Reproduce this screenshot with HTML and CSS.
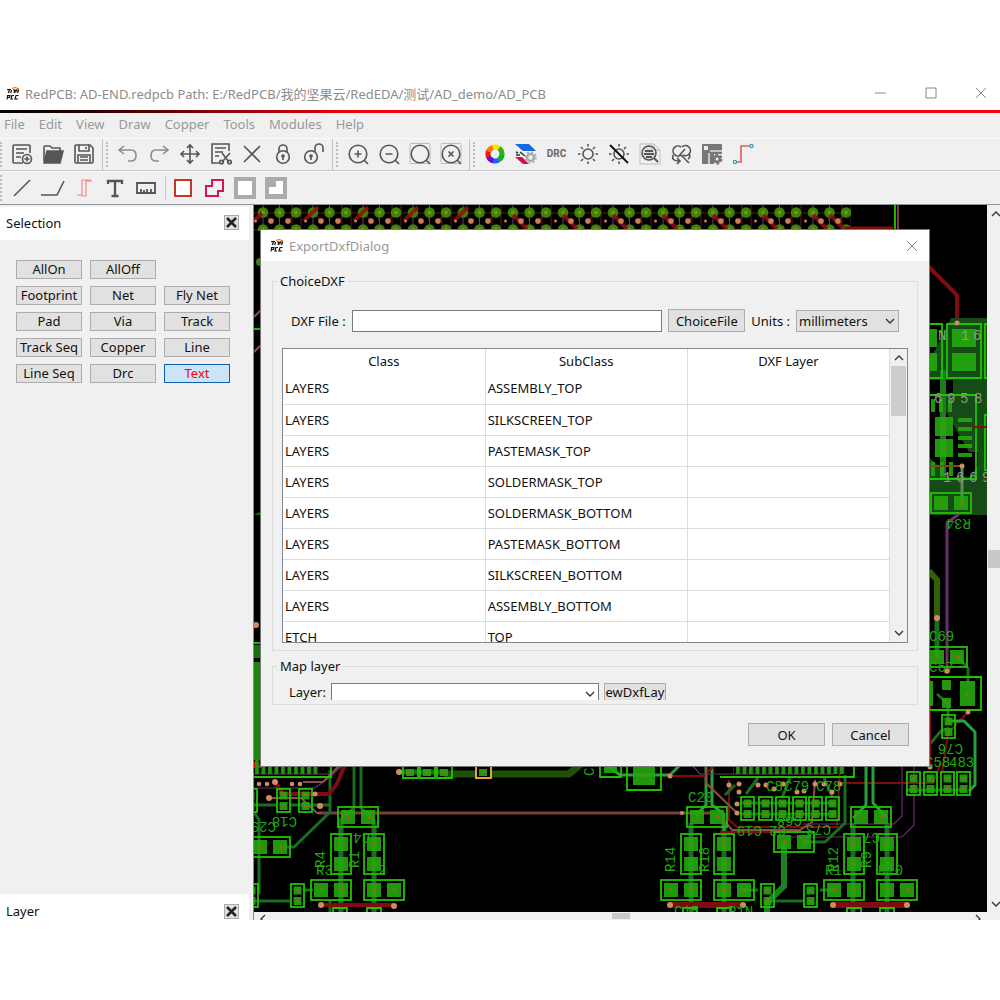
FILE: index.html
```html
<!DOCTYPE html>
<html lang="en">
<head>
  <meta charset="UTF-8">
  <title>RedPCB</title>
  <link rel="stylesheet" href="styles.css">
</head>
<body>
  <!-- shared symbols -->
  <svg class="defs" aria-hidden="true">
    <defs>
      <symbol id="logo" viewBox="0 0 14 14">
        <path d="M6 1.500l3-1 4 1.500" stroke="#f07a1e" stroke-width="1.300" fill="none"/>
        <path d="M1 2.500h4M3.500 2l-1 4M5.500 3l-.8 3M7 3h2l-1 3M9.500 5.500l1-2.500h2l-1 3M1 8.500h3l-.5 2H2M1.800 8.500L1 12.500M8 8.500H6l-1 3.500h2M12.500 8.500h-2.500l-1 3.500h3" stroke="#111" stroke-width="1.200" fill="none"/>
      </symbol>
      <symbol id="chev" viewBox="0 0 10 6"><path d="M1 1l4 4 4-4" fill="none" stroke="#333" stroke-width="1.300"/></symbol>
      <symbol id="compH" viewBox="0 0 42 22">
        <rect class="outline" x="1" y="1" width="40" height="20"/>
        <rect class="pad" x="4" y="4" width="14" height="14"/><rect class="pad" x="24" y="4" width="14" height="14"/>
        <path class="mark" d="M10 9l2 1-1 3M30 10h3l-2 3"/>
      </symbol>
      <symbol id="compV" viewBox="0 0 22 42">
        <rect class="outline" x="1" y="1" width="20" height="40"/>
        <rect class="pad" x="4" y="4" width="14" height="14"/><rect class="pad" x="4" y="24" width="14" height="14"/>
        <path class="mark" d="M9 12v-2l3 1v-2M9 31l3-1"/>
      </symbol>
      <symbol id="compS" viewBox="0 0 15 25">
        <rect class="outline" x="1" y="1" width="13" height="23"/>
        <rect class="pad" x="3.500" y="3.500" width="8" height="8"/><rect class="pad" x="3.500" y="14" width="8" height="8"/>
        <path class="mark" d="M6 7h3M6 18h3"/>
      </symbol>
      <pattern id="balls" patternUnits="userSpaceOnUse" x="254" y="204" width="50" height="17">
        <path d="M9 8.500l8.300 8.500M42 8.500l-8 8.500M25 8.500v8.500" stroke="#8b2a22" stroke-width="1"/>
        <path d="M9 0v17M25.500 0v17" stroke="#74357f" stroke-width="1"/>
        <path d="M38 0v17M47 0v17M0 9h50" stroke="#5c1a14" stroke-width="1"/>
        <g fill="#3d8206"><circle cx="9" cy="8.500" r="5.300"/><circle cx="25.500" cy="8.500" r="5.300"/><circle cx="42" cy="8.500" r="5.300"/></g>
        <g fill="#74941c"><circle cx="9" cy="8.500" r="2"/><circle cx="25.500" cy="8.500" r="2"/><circle cx="42" cy="8.500" r="2"/></g>
      </pattern>
      <pattern id="vias" patternUnits="userSpaceOnUse" x="254" y="213" width="50" height="17">
        <g fill="#cf7c59"><circle cx="17" cy="8" r="2.800"/><circle cx="34" cy="8" r="2.800"/><circle cx="1.500" cy="8" r="1.500"/></g>
      </pattern>
      <pattern id="comb" patternUnits="userSpaceOnUse" x="254" y="760" width="6.500" height="20"><rect x="1" y="0" width="4" height="14" fill="#23940f"/></pattern>
    </defs>
  </svg>

  <div class="app">
    <header class="titlebar">
      <svg class="logo"><use href="#logo"/></svg>
      <span class="title">RedPCB: AD-END.redpcb Path: E:/RedPCB/我的坚果云/RedEDA/测试/AD_demo/AD_PCB</span>
      <div class="window-controls">
        <button aria-label="Minimize"><svg viewBox="0 0 12 12"><path d="M0 6h11"/></svg></button>
        <button aria-label="Maximize"><svg viewBox="0 0 12 12"><path d="M1 1h10v10H1z"/></svg></button>
        <button aria-label="Close"><svg viewBox="0 0 12 12"><path d="M1 1l10 10M11 1L1 11"/></svg></button>
      </div>
    </header>

    <nav class="menubar">
      <a href="#">File</a><a href="#">Edit</a><a href="#">View</a><a href="#">Draw</a><a href="#">Copper</a><a href="#">Tools</a><a href="#">Modules</a><a href="#">Help</a>
    </nav>

    <div class="toolbar">
      <div class="tools first">
        <button aria-label="New"><svg viewBox="0 0 24 24"><path d="M20 11V4q0-1-1-1H4Q3 3 3 4v16q0 1 1 1h9M6 7h11M6 11h8M6 15h5"/><circle cx="17" cy="17" r="4.500"/><path d="M17 14.500v5M14.500 17h5"/></svg></button>
        <button aria-label="Open"><svg viewBox="0 0 24 24"><path class="fill" d="M6 9h16l-3 12H3z"/><path d="M3 19V5q0-1 1-1h5l2 2h8v3"/></svg></button>
        <button aria-label="Save"><svg viewBox="0 0 24 24"><path d="M3 4q0-1 1-1h14l3 3v14q0 1-1 1H4q-1 0-1-1zM7 3v6h10V3M14 5v2M6 21v-8h12v8M8 15h8M8 18h8"/></svg></button>
      </div>
      <div class="tools">
        <button aria-label="Undo"><svg class="light" viewBox="0 0 24 24"><path d="M8 4L3 8l5 4M4 8h11q5 0 5 5.500T15 19h-3"/></svg></button>
        <button aria-label="Redo"><svg class="light" viewBox="0 0 24 24"><path d="M16 4l5 4-5 4M20 8H9q-5 0-5 5.500T9 19h3"/></svg></button>
        <button aria-label="Move"><svg viewBox="0 0 24 24"><path d="M12 3v18M3 12h18M9 6l3-3 3 3M9 18l3 3 3-3M6 9l-3 3 3 3M18 9l3 3-3 3"/></svg></button>
        <button aria-label="Cut"><svg viewBox="0 0 24 24"><path d="M20 9V2H3v19h7M6 6h11M6 10h8M6 14h4M13 11l7 9M21 11l-8 9"/><circle cx="12.500" cy="20" r="1.800"/><circle cx="20.500" cy="20" r="1.800"/></svg></button>
        <button aria-label="Delete"><svg viewBox="0 0 24 24"><path d="M4 4l16 16M20 4L4 20"/></svg></button>
        <button aria-label="Lock"><svg viewBox="0 0 24 24"><circle cx="12" cy="15" r="6.300"/><path d="M8 10V7a4 4 0 0 1 8 0v3M12 14v4"/><circle class="fill" cx="12" cy="14" r="1"/></svg></button>
        <button aria-label="Unlock"><svg viewBox="0 0 24 24"><circle cx="9" cy="15" r="6.300"/><path d="M13 10V6a4 4 0 0 1 8 0v4M9 14v4"/><circle class="fill" cx="9" cy="14" r="1"/></svg></button>
      </div>
      <div class="tools">
        <button aria-label="Zoom in"><svg viewBox="0 0 24 24"><circle cx="12" cy="12" r="8.800"/><path d="M18 18l4 4M8.500 12h7M12 8.500v7"/></svg></button>
        <button aria-label="Zoom out"><svg viewBox="0 0 24 24"><circle cx="12" cy="12" r="8.800"/><path d="M18 18l4 4M8.500 12h7"/></svg></button>
        <button aria-label="Zoom fit"><svg viewBox="0 0 24 24"><rect class="frame" x="2" y="1.500" width="20" height="20" rx="1"/><circle cx="12" cy="12" r="8.800"/><path d="M18 18l4 4"/></svg></button>
        <button aria-label="Zoom selected"><svg viewBox="0 0 24 24"><rect class="frame" x="2" y="1.500" width="20" height="20" rx="1"/><circle cx="12" cy="12" r="8.800"/><path d="M18 18l4 4M9.500 9.500l5 5M14.500 9.500l-5 5"/></svg></button>
      </div>
      <div class="tools last">
        <button aria-label="Colors"><svg class="wheel" viewBox="0 0 24 24"><g stroke-width="5" stroke-dasharray="7.330 36.650"><circle cx="12" cy="12" r="7" stroke="#0bb02a"/><circle cx="12" cy="12" r="7" stroke="#1266f1" transform="rotate(60 12 12)"/><circle cx="12" cy="12" r="7" stroke="#6a10c8" transform="rotate(105 12 12)"/><circle cx="12" cy="12" r="7" stroke="#f01414" transform="rotate(155 12 12)"/><circle cx="12" cy="12" r="7" stroke="#ff7a00" transform="rotate(200 12 12)"/><circle cx="12" cy="12" r="7" stroke="#ffe100" transform="rotate(250 12 12)"/><circle cx="12" cy="12" r="7" stroke="#35ad12" transform="rotate(305 12 12)"/></g></svg></button>
        <button aria-label="Layers"><svg viewBox="0 0 24 24"><path d="M1 2h14l7 7H9z" fill="#1769e0" stroke="none"/><path d="M2 10l2 1M6 10l5 4M2 13h4" stroke="#333"/><path d="M1 15h7l7 7H9z" fill="#d4104c" stroke="none"/><circle cx="16.500" cy="15.500" r="3.500" stroke="#aaa" stroke-width="2.500"/><circle cx="16.500" cy="15.500" r="5.500" stroke="#aaa" stroke-width="1.500" stroke-dasharray="2 2.320"/></svg></button>
        <button aria-label="Design rule check"><span class="drc">DRC</span></button>
        <button aria-label="Highlight"><svg viewBox="0 0 24 24"><circle cx="12" cy="12" r="5"/><path d="M12 2v2.500M12 19.500V22M2 12h2.500M19.500 12H22M5 5l2 2M17 17l2 2M19 5l-2 2M7 17l-2 2"/></svg></button>
        <button aria-label="Highlight off"><svg viewBox="0 0 24 24"><circle cx="12" cy="12" r="5"/><path d="M12 2v2.500M12 19.500V22M2 12h2.500M19.500 12H22M5 19l2-2M19 5l-2 2"/><path d="M3 3l18 18" stroke="#111" stroke-width="2"/></svg></button>
        <button aria-label="Find"><svg viewBox="0 0 24 24"><path class="frame" d="M2 2h14l6 6v14H2zM16 2v6h6"/><circle cx="11" cy="11" r="7" fill="#ddd"/><path d="M7 9h8M6 12h10M8 15h6M16 16l4 4" stroke-width="2"/></svg></button>
        <button aria-label="Replace"><svg viewBox="0 0 24 24" stroke-width="1.300"><path d="M12 5a5 5 0 1 0 0 8M13 5a5 5 0 1 1 1 8M4 13q-2 6 6 6M8 16l3 3-3 3M12 13l8 8M9 15l7-8M20 12q2 3-1 5"/></svg></button>
        <button aria-label="Module settings"><svg viewBox="0 0 24 24"><path d="M3 2h18q1 0 1 1v9h-8v10H3q-1 0-1-1V3q0-1 1-1z" fill="#777" stroke="none"/><path d="M4 4h4v4H4z" fill="#eee" stroke="none"/><path d="M10 9h12M9 11v11" stroke="#ddd"/><circle cx="17" cy="17" r="4" fill="#777" stroke="#777" stroke-width="3" stroke-dasharray="2.500 1.700"/><circle cx="17" cy="17" r="1.500" fill="#eee" stroke="none"/></svg></button>
        <button aria-label="Route"><svg viewBox="0 0 24 24"><path d="M5 20h5V4h9" stroke="#e0604f"/><circle cx="4" cy="20" r="1.600" stroke="#4592bd" stroke-width="1.200"/><circle cx="20.500" cy="4" r="1.600" stroke="#4592bd" stroke-width="1.200"/></svg></button>
      </div>
    </div>

    <div class="toolbar second">
      <div class="tools first last">
        <button aria-label="Line"><svg viewBox="0 0 24 24"><path d="M4 20L20 4"/></svg></button>
        <button aria-label="Polyline"><svg viewBox="0 0 24 24"><path d="M0 19h16l7-14"/></svg></button>
        <button aria-label="Differential pair"><svg viewBox="0 0 24 24"><path d="M5 19h5V4h9M9 20h5V5h6" stroke="#f28b88" stroke-width="1.200"/></svg></button>
        <button aria-label="Text"><svg viewBox="0 0 24 24"><path d="M5 8V5h14v3M12 5v15M8.500 20h7" stroke-width="2.300"/></svg></button>
        <button aria-label="Measure"><svg viewBox="0 0 24 24"><path d="M3 7h18v10H3zM7 17v-4M10 17v-3M13 17v-4M17 17v-4" stroke-width="1.800"/></svg></button>
        <span class="divider"></span>
        <button aria-label="Rectangle"><svg viewBox="0 0 24 24"><path d="M4 4h16v16H4z" fill="#fff" stroke="#c8362b" stroke-width="2"/></svg></button>
        <button aria-label="Polygon"><svg viewBox="0 0 24 24"><path d="M10 4h11v11h-5v5H4V10h6z" stroke="#d3155a" stroke-width="2"/></svg></button>
        <button aria-label="Copper fill"><svg viewBox="0 0 24 24"><path d="M3 3h18v18H3z" fill="#fff" stroke="#ababab" stroke-width="4"/></svg></button>
        <button aria-label="Copper cutout"><svg viewBox="0 0 24 24"><path d="M1 1h22v22H1z" fill="#ababab" stroke="none"/><path d="M12 5h7v13H5v-7h7z" fill="#fff" stroke="none"/></svg></button>
      </div>
    </div>

    <main class="workspace">
      <aside class="dock">
        <div class="dock-title"><span>Selection</span><button aria-label="Close selection"><svg viewBox="0 0 13 13"><path d="M2 2l9 9M11 2l-9 9"/></svg></button></div>
        <div class="filters">
          <button>AllOn</button><button>AllOff</button><i></i>
          <button>Footprint</button><button>Net</button><button>Fly Net</button>
          <button>Pad</button><button>Via</button><button>Track</button>
          <button>Track Seq</button><button>Copper</button><button>Line</button>
          <button>Line Seq</button><button>Drc</button><button class="active">Text</button>
        </div>
        <div class="dock-title bottom"><span>Layer</span><button aria-label="Close layer"><svg viewBox="0 0 13 13"><path d="M2 2l9 9M11 2l-9 9"/></svg></button></div>
      </aside>

      <div class="view">
        <svg class="board" viewBox="254 205 733 707" preserveAspectRatio="xMinYMin slice">
          <!-- ball grid along the top -->
          <rect x="254" y="205" width="597" height="26" fill="url(#balls)"/>
          <g stroke="#8a1010" stroke-width="4" stroke-opacity=".85">
            <path d="M254 221l8-8M304 221l14-14M354 221l14-14M404 221l14-14M454 221l14-14M513 215l14 14M563 215l14 14M613 215l14 14M663 215l14 14M713 215l14 14M763 215l14 14M813 215l14 14M830 215l14 14"/>
          </g>
          <rect x="254" y="213" width="590" height="17" fill="url(#vias)"/>
          <path d="M845 228h48" stroke="#7d0d0d" stroke-width="3"/>
          <path d="M895 205v26" stroke="#1cb500" stroke-width="2"/><path d="M898 205v26" stroke="#744037" stroke-width="2"/>

          <!-- left edge -->
          <path d="M254 317l8-8M254 352l8-8" class="brown"/>
          <path d="M254 329h8M254 643h8" stroke="#1cb500" stroke-width="2"/>
          <circle cx="256" cy="625" r="3" class="via"/><circle cx="260" cy="262" r="4" fill="#3d8206"/>
          <path d="M254 515h8v-4M254 645h8v13h-8z" fill="#157208"/>
          <path d="M254 662h8v98h-8z" fill="#1c880a"/>
          <path d="M254 762h4l3 6h-7z" fill="#d01010"/>

          <!-- right side -->
          <path d="M929 267l28 28v28" class="red"/>
          <path d="M951 318h36v197h-58v-63h40l-40-70v-20z" fill="#164a16"/>
          <path d="M929 380h24v14h-24zM940 452h38v13l-8 12h-20l-21-20v-40z" fill="#000"/>
          <path d="M943 370v110" stroke="#1f7a1f" stroke-width="6"/>
          <path class="outline" d="M929 324h13v54h-13M947 324h34v54h-34zM990 324h-5v54h5M929 395h47v84h-47M990 415h-5v55h5"/>
          <path class="pad" d="M929 329h8v18h-8zM929 353h8v18h-8zM952 329h24v18h-24zM952 353h24v18h-24zM935 417h18v19h-18zM935 439h18v18h-18zM931 399h4v13h-4zM939 399h4v13h-4zM948 399h4v13h-4zM931 462h4v14h-4zM940 462h4v14h-4zM949 462h4v14h-4zM958 418h14v4h-14zM958 427h14v4h-14zM958 436h14v4h-14zM958 444h14v4h-14zM958 453h14v4h-14z"/>
          <path class="mark" d="M963 338h3M963 364h3M942 426h4M942 448h4M963 420h3M963 429h3"/>
          <path d="M972 427h15" class="red thin"/>
          <path d="M929 466h33" stroke="#7a4a22" stroke-width="2"/><path d="M962 466v40" stroke="#5f8a5f" stroke-width="3"/>
          <path d="M959 514l-12 9v145" fill="none" stroke="#6b2f6e" stroke-width="3"/>
          <g class="net"><text x="938" y="340">N</text><text x="973" y="340">6</text><text x="961" y="340">1</text><text x="934" y="403">6</text><text x="947" y="403">9</text><text x="960" y="403">5</text><text x="974" y="403">8</text><text x="943" y="482">1</text><text x="956" y="482">6</text><text x="969" y="482">6</text><text x="982" y="482">9</text></g>
          <use href="#compH" x="930" y="492" width="42" height="22"/>
          <path d="M929 571l8 9v38" fill="none" stroke="#2f6206" stroke-width="6"/>
          <path d="M937 618v38" class="track wide"/>
          <path d="M957 656l11 12v16M937 694l11 10v20M929 745l12-14 8-3" class="track"/>
          <path d="M968 712l-20 21-6 40M930 680v86" class="red thin"/>
          <path d="M948 721h16l11 11v53l-6 6" class="bright"/>
          <use href="#compH" x="926" y="646" width="42" height="22"/>
          <path class="outline" d="M921 677h60v33h-60z"/>
          <path class="pad" d="M960 681h15v25h-15zM942 680h9v10h-9zM942 698h9v10h-9zM925 681h8v25h-8z"/>
          <path class="mark" d="M967 692v4M945 685h3M945 703h3"/>
          <use href="#compS" x="941" y="714" width="15" height="25"/>
          <g class="via"><circle cx="957" cy="323" r="2.500"/><circle cx="962" cy="466" r="2.500"/><circle cx="937" cy="618" r="3"/><circle cx="947" cy="671" r="2.800"/><circle cx="968" cy="712" r="2.500"/><circle cx="930" cy="767" r="2.500"/></g>

          <!-- tracks under the dialog -->
          <path d="M318 813h392" class="brown wide"/>
          <path d="M254 805h22M290 805h40M254 812l5 8v74M254 901h36M303 890h10M330 770v42l-36 35h-10M354 760v48l-14 12v92M361 760v48l13 12v92M330 900v12" class="track"/>
          <path d="M341 823v89M374 823v89M691 823v89M724 823v89M853 823v89M887 823v89" class="track wide"/>
          <path d="M254 774h75M254 788h60q12-6 34-28" class="purple"/>
          <path d="M275 782l8 12h46l8-10 8-20" class="red"/>
          <path d="M268 798h33l16 15h4M303 782h20l26-26" class="brown"/>
          <path d="M321 905h73" class="red"/><path d="M670 905h70M833 905h74" class="red big"/>
          <path d="M399 772h45" class="track wide"/><path d="M444 774h32M491 774h78l12-10" fill="none" stroke="#204f06" stroke-width="7"/>
          <path d="M608 766l12 9h50l12-12M712 765v40l12 9v20M706 765v40l-10 10" class="bright"/>
          <path d="M672 776h32l10-10M729 780v40l8 7h100l3-62M720 832h85" class="red thin"/>
          <path d="M706 765v18l32 31M722 818l10 12h68l12-8 3-42" class="brown"/>
          <path d="M690 763l10 11h50M734 774h100M802 824h92l8-8v-60M790 837h112l12-12v-60" class="purple"/>
          <path d="M840 783h93l8-20" class="red thin"/>
          <path d="M866 760v45l-13 13M873 760v43l14 15" class="bright"/>
          <path d="M845 775v48l-20 19h-18M906 790h60M758 890h-20M820 890h13M770 901h35M740 803h95M740 814h95" class="track"/>
          <path d="M784 842v44l-17 17v12" fill="none" stroke="#1d8023" stroke-width="6"/>
          <path d="M735 785l-10 10M758 778l-12 16M790 778l-8 20M824 778l8 18" class="track"/>

          <!-- connectors -->
          <path class="outline" d="M254 777h77v-17M720 777h134v-17"/>
          <rect x="254" y="760" width="66" height="17" fill="url(#comb)"/><rect x="733" y="760" width="112" height="17" fill="url(#comb)"/>
          <path class="outline" d="M403 760h15v18h-15zM420 760h15v18h-15zM437 760h15v18h-15zM600 760h21v17h-21zM627 760h34v30h-34z"/>
          <path d="M476 760h15v18h-15z" fill="none" stroke="#e3a33a" stroke-width="2"/>
          <path class="pad" d="M406 769h8v7h-8zM423 769h8v7h-8zM440 769h8v7h-8zM479 769h8v7h-8zM604 760h13v13h-13zM633 760h22v25h-22z"/>
          <path class="mark" d="M408 772h4M425 772h4M442 772h4M481 772h4M642 776h4"/>

          <!-- two pad parts -->
          <use href="#compH" x="337" y="806" width="42" height="22"/>
          <use href="#compH" x="310" y="879" width="42" height="22"/>
          <use href="#compH" x="363" y="879" width="42" height="22"/>
          <use href="#compH" x="249" y="836" width="42" height="22"/>
          <use href="#compH" x="686" y="806" width="42" height="22"/>
          <use href="#compH" x="660" y="879" width="42" height="22"/>
          <use href="#compH" x="713" y="879" width="42" height="22"/>
          <use href="#compH" x="850" y="806" width="42" height="22"/>
          <use href="#compH" x="773" y="831" width="42" height="22"/>
          <use href="#compH" x="823" y="879" width="42" height="22"/>
          <use href="#compH" x="876" y="879" width="42" height="22"/>
          <use href="#compV" x="330" y="833" width="22" height="42"/>
          <use href="#compV" x="363" y="833" width="22" height="42"/>
          <use href="#compV" x="680" y="833" width="22" height="42"/>
          <use href="#compV" x="713" y="833" width="22" height="42"/>
          <use href="#compV" x="843" y="833" width="22" height="42"/>
          <use href="#compV" x="876" y="833" width="22" height="42"/>
          <use href="#compS" x="276" y="788" width="15" height="25"/>
          <use href="#compS" x="298" y="788" width="15" height="25"/>
          <use href="#compS" x="243" y="788" width="15" height="25"/>
          <use href="#compS" x="290" y="883" width="15" height="25"/>
          <use href="#compS" x="244" y="883" width="15" height="25"/>
          <use href="#compS" x="740" y="796" width="15" height="25"/>
          <use href="#compS" x="758" y="796" width="15" height="25"/>
          <use href="#compS" x="775" y="796" width="15" height="25"/>
          <use href="#compS" x="792" y="796" width="15" height="25"/>
          <use href="#compS" x="808" y="796" width="15" height="25"/>
          <use href="#compS" x="825" y="796" width="15" height="25"/>
          <use href="#compS" x="760" y="883" width="15" height="25"/>
          <use href="#compS" x="803" y="883" width="15" height="25"/>
          <use href="#compS" x="906" y="771" width="15" height="25"/>
          <use href="#compS" x="923" y="771" width="15" height="25"/>
          <use href="#compS" x="940" y="771" width="15" height="25"/>
          <use href="#compS" x="956" y="771" width="15" height="25"/>
          <path class="outline" d="M333 914v-6h14v6M367 914v-6h14v6M683 914v-6h14v6M717 914v-6h14v6M847 914v-6h14v6M880 914v-6h14v6"/>

          <g class="via">
            <circle cx="399" cy="772" r="3"/><circle cx="269" cy="798" r="3"/><circle cx="275" cy="782" r="3"/><circle cx="259" cy="784" r="2.300"/><circle cx="267" cy="784" r="2.300"/><circle cx="292" cy="784" r="2.300"/><circle cx="300" cy="784" r="2.300"/><circle cx="320" cy="806" r="3"/><circle cx="315" cy="794" r="2.500"/>
            <circle cx="321" cy="905" r="3"/><circle cx="394" cy="906" r="3"/><circle cx="670" cy="905" r="3"/><circle cx="743" cy="905" r="3"/><circle cx="833" cy="905" r="3"/><circle cx="907" cy="905" r="3"/>
            <circle cx="670" cy="776" r="2.500"/><circle cx="682" cy="813" r="2"/><circle cx="729" cy="785" r="2.500"/><circle cx="739" cy="784" r="2.500"/><circle cx="739" cy="792" r="2.500"/><circle cx="737" cy="804" r="2.500"/><circle cx="737" cy="813" r="2.500"/><circle cx="758" cy="785" r="2.500"/><circle cx="766" cy="785" r="2.500"/><circle cx="774" cy="789" r="2.500"/><circle cx="783" cy="784" r="2.500"/><circle cx="797" cy="792" r="2.500"/><circle cx="804" cy="791" r="2.500"/><circle cx="815" cy="784" r="2.500"/><circle cx="824" cy="784" r="2.500"/><circle cx="832" cy="792" r="2.500"/><circle cx="840" cy="784" r="2.500"/>
          </g>

          <g class="ref">
            <text x="929" y="641">C69</text><text x="929" y="672">C67</text>
            <text transform="translate(971 519) rotate(180)">R34</text>
            <text transform="translate(963 744) rotate(180)">C76</text>
            <text x="925" y="767">C58</text><text x="949" y="767">483</text>
            <text transform="translate(297 817) rotate(180)">C18</text><text transform="translate(276 822) rotate(180)">C29</text>
            <text transform="translate(370 833) rotate(180)">C4</text>
            <text transform="translate(325 868) rotate(-90)">R4</text><text transform="translate(359 868) rotate(-90)">R1</text>
            <text x="316" y="875">R3</text><text x="378" y="875">2</text>
            <text transform="translate(594 776) rotate(-90)">C</text><text x="688" y="802">C20</text>
            <text transform="translate(675 872) rotate(-90)">R14</text><text transform="translate(709 872) rotate(-90)">R18</text>
            <text x="674" y="916">C15</text><text x="728" y="916">R1N</text>
            <text x="766" y="791">C8</text><text x="784" y="791">C79</text><text x="816" y="791">C78</text>
            <text transform="translate(762 826) rotate(180)">C19</text><text transform="translate(786 826) rotate(180)">C2</text><text transform="translate(802 816) rotate(180)">C68</text><text transform="translate(831 825) rotate(180)">C73</text>
            <text transform="translate(838 872) rotate(-90)">R12</text><text transform="translate(871 868) rotate(-90)">R9</text>
            <text x="825" y="875">R1</text><text x="878" y="875">R10</text><text transform="translate(880 833) rotate(180)">C7</text>
          </g>
        </svg>
        <div class="vbar"><svg class="up"><use href="#chev"/></svg><i></i><svg><use href="#chev"/></svg></div>
        <div class="hbar"><svg class="prev"><use href="#chev"/></svg><i></i><svg class="next"><use href="#chev"/></svg></div>
      </div>

      <section class="dialog" role="dialog" aria-label="ExportDxfDialog">
        <header class="dialog-title">
          <svg class="logo"><use href="#logo"/></svg>
          <span>ExportDxfDialog</span>
          <button aria-label="Close dialog"><svg viewBox="0 0 12 12"><path d="M1 1l10 10M11 1L1 11"/></svg></button>
        </header>
        <fieldset>
          <legend>ChoiceDXF</legend>
          <div class="file-row">
            <label for="dxfFile">DXF File :</label>
            <input type="text" id="dxfFile">
            <button class="btn">ChoiceFile</button>
            <label for="units">Units :</label>
            <div class="combo units"><select id="units"><option>millimeters</option></select><svg><use href="#chev"/></svg></div>
          </div>
          <div class="grid">
            <table>
              <thead><tr><th>Class</th><th>SubClass</th><th>DXF Layer</th></tr></thead>
              <tbody>
                <tr><td>LAYERS</td><td>ASSEMBLY_TOP</td><td></td></tr>
                <tr><td>LAYERS</td><td>SILKSCREEN_TOP</td><td></td></tr>
                <tr><td>LAYERS</td><td>PASTEMASK_TOP</td><td></td></tr>
                <tr><td>LAYERS</td><td>SOLDERMASK_TOP</td><td></td></tr>
                <tr><td>LAYERS</td><td>SOLDERMASK_BOTTOM</td><td></td></tr>
                <tr><td>LAYERS</td><td>PASTEMASK_BOTTOM</td><td></td></tr>
                <tr><td>LAYERS</td><td>SILKSCREEN_BOTTOM</td><td></td></tr>
                <tr><td>LAYERS</td><td>ASSEMBLY_BOTTOM</td><td></td></tr>
                <tr><td>ETCH</td><td>TOP</td><td></td></tr>
              </tbody>
            </table>
            <div class="grid-bar"><svg class="up"><use href="#chev"/></svg><i></i><svg><use href="#chev"/></svg></div>
          </div>
        </fieldset>
        <fieldset class="map">
          <legend>Map layer</legend>
          <div class="map-row">
            <label for="layer">Layer:</label>
            <div class="combo layer"><select id="layer"></select><svg><use href="#chev"/></svg></div>
            <button class="btn clipped">ewDxfLay</button>
          </div>
        </fieldset>
        <div class="actions"><button class="btn">OK</button><button class="btn">Cancel</button></div>
      </section>
    </main>
  </div>
</body>
</html>
```
FILE: styles.css
```css
* {
  box-sizing: border-box;
}
body {
  margin: 0;
  padding: 80px 0;
  height: 100vh;
  background: #fff;
  color: #111;
  font: 13px/18px "Noto Sans", "Noto Sans CJK SC", sans-serif;
}
button, input, select {
  font: inherit;
  color: inherit;
}
button {
  padding: 0;
  border: none;
  background: none;
}
.defs {
  position: absolute;
  width: 0;
  height: 0;
}
.app {
  display: flex;
  flex-direction: column;
  height: 100%;
  overflow: hidden;
  background: #f0f0f0;
}

/* title and menu */
.titlebar {
  display: flex;
  align-items: center;
  height: 33px;
  padding: 0 0 2px 6px;
  background: #fff;
  border-bottom: 3px solid;
  border-image: linear-gradient(90deg, #000 0, #200 80px, #f00010 360px) 1;
  color: #8c8c8c;
}
.logo {
  width: 14px;
  height: 14px;
  margin-right: 5px;
}
.window-controls {
  display: flex;
  margin: 0 -6px 0 auto;
}
.window-controls button {
  width: 50px;
  height: 28px;
}
.window-controls svg, .dialog-title button svg {
  width: 12px;
  height: 12px;
  fill: none;
  stroke: #888;
}
.menubar {
  display: flex;
  gap: 14px;
  height: 25px;
  padding: 2px 4px;
}
.menubar a {
  color: #999;
  text-decoration: none;
}

/* toolbars */
.toolbar {
  display: flex;
  height: 33px;
  border-top: 1px solid #fafafa;
  border-bottom: 1px solid #c9c9c9;
}
.second {
  height: 34px;
  border-bottom-color: #8f9399;
}
.tools {
  position: relative;
  display: flex;
  align-items: center;
  padding: 0 3px 1px 9px;
  border-right: 1px solid #c4c4c4;
}
.tools::before {
  content: "";
  position: absolute;
  left: 3px;
  top: 3px;
  bottom: 3px;
  border-left: 2px dotted #bbb;
}
.tools.first {
  margin-left: -3px;
}
.tools.last {
  border-right: none;
}
.tools button {
  display: flex;
  align-items: center;
  justify-content: center;
  width: 31px;
  height: 30px;
}
.tools svg {
  width: 24px;
  height: 24px;
  fill: none;
  stroke: #555;
  stroke-width: 1.6;
}
.tools svg.light {
  stroke: #8d8d8d;
}
.tools .fill {
  fill: #555;
}
.tools .frame {
  stroke: #bdbdbd;
  stroke-width: 1;
}
.drc {
  color: #666;
  font: bold 10px/12px Roboto, sans-serif;
}
.divider {
  width: 1px;
  height: 24px;
  margin: 0 1px 0 4px;
  background: #c8c8c8;
}

/* docked panels */
.workspace {
  position: relative;
  display: flex;
  flex: 1;
  min-height: 0;
}
.dock {
  display: flex;
  flex-direction: column;
  width: 253px;
  padding-top: 2px;
}
.dock-title {
  display: flex;
  align-items: center;
  justify-content: space-between;
  height: 33px;
  margin-right: 4px;
  padding: 0 10px 2px 6px;
  background: #fff;
}
.dock-title.bottom {
  height: 26px;
  margin-top: auto;
  padding-top: 10px;
}
.dock-title svg {
  display: block;
  width: 15px;
  height: 15px;
  background: #e0e0e0;
  border: 1px solid #aaa;
  stroke: #222;
  stroke-width: 2.5;
}
.filters {
  display: grid;
  grid-template-columns: repeat(3, 66px);
  gap: 7px 8px;
  padding: 20px 16px;
}
.filters button, .btn {
  background: #e1e1e1;
  border: 1px solid #adadad;
}
.filters button {
  height: 19px;
  line-height: 17px;
  overflow: hidden;
  white-space: nowrap;
}
.filters .active {
  background: #cce4f7;
  border-color: #0f60a8;
  color: #f00;
}

/* board canvas */
.view {
  display: grid;
  grid-template: minmax(0, 1fr) 8px / minmax(0, 1fr) 13px;
  flex: 1;
  min-width: 0;
  border-left: 1px solid #888;
}
.board {
  width: 100%;
  height: 100%;
  background: #000;
}
.outline {
  fill: none;
  stroke: #1ec400;
  stroke-width: 1.8;
}
.pad {
  fill: #23a80d;
  fill-opacity: .9;
}
.mark {
  fill: none;
  stroke: #d2501c;
}
.track, .bright, .brown, .purple, .red {
  fill: none;
  stroke: #1c6b22;
  stroke-width: 3;
}
.bright {
  stroke: #28a03c;
}
.brown {
  stroke: #8a5044;
  stroke-width: 2;
}
.purple {
  stroke: #6b2f6e;
  stroke-width: 1.2;
}
.red {
  stroke: #7d0d10;
  stroke-width: 4;
}
.thin {
  stroke-width: 2;
}
.wide {
  stroke-width: 5;
}
.brown.wide {
  stroke: #74423a;
  stroke-width: 3;
}
.big {
  stroke-width: 6;
}
.via {
  fill: #d08a68;
}
.ref {
  fill: #1fa810;
  font: 14px "Liberation Mono", monospace;
}
.net {
  fill: #8a9c8a;
  font: 14px "Liberation Mono", monospace;
}
.vbar {
  display: flex;
  flex-direction: column;
  justify-content: space-between;
  align-items: flex-end;
  padding: 6px 0 5px;
  overflow: hidden;
}
.vbar svg, .hbar svg, .grid-bar svg, .combo svg {
  width: 10px;
  height: 6px;
}
.vbar svg {
  margin-right: -1px;
}
.vbar i {
  width: 12px;
  height: 18px;
  background: #c9c9c9;
}
.up {
  transform: rotate(180deg);
}
.hbar {
  display: flex;
  justify-content: space-between;
  padding: 1px 4px;
  overflow: hidden;
}
.hbar svg {
  margin-top: 3px;
}
.hbar i {
  width: 18px;
  background: #c9c9c9;
}
.prev {
  transform: rotate(90deg);
}
.next {
  transform: rotate(-90deg);
}

/* export dialog */
.dialog {
  position: absolute;
  left: 261px;
  top: 25px;
  width: 668px;
  padding-bottom: 20px;
  background: #f0f0f0;
  box-shadow: 0 0 0 1px #777;
}
.dialog-title {
  display: flex;
  align-items: center;
  height: 31px;
  padding: 0 11px 0 9px;
  background: #fff;
  color: #999;
}
.dialog-title button {
  display: flex;
  margin-left: auto;
}
fieldset {
  min-width: 0;
  margin: 11px 11px 0;
  padding: 19px 9px 7px;
  border: 1px solid #dcdcdc;
}
legend {
  margin-left: -5px;
  padding: 0 3px;
}
.file-row {
  display: flex;
  align-items: center;
  gap: 6px;
  padding: 0 9px;
}
.file-row input {
  flex: 1;
  min-width: 0;
  height: 22px;
  border: 1px solid #7a7a7a;
}
.btn {
  height: 23px;
  width: 77px;
}
.combo {
  position: relative;
}
.combo select {
  width: 100%;
  height: 22px;
  padding: 0 2px;
  border: 1px solid #adadad;
  border-radius: 0;
  background: #e1e1e1;
  appearance: none;
}
.combo svg {
  position: absolute;
  right: 4px;
  top: 8px;
}
.units {
  width: 103px;
}
.grid {
  display: flex;
  height: 295px;
  margin-top: 16px;
  overflow: hidden;
  background: #fff;
  border: 1px solid #828790;
}
table {
  flex: 1;
  width: 100%;
  border-collapse: collapse;
  table-layout: fixed;
}
th {
  height: 24px;
  padding: 0;
  font-weight: normal;
}
th, td {
  border-right: 1px solid #dcdcdc;
}
td {
  height: 31px;
  padding: 0 2px;
  border-bottom: 1px solid #dcdcdc;
}
.grid-bar {
  display: flex;
  flex-direction: column;
  align-items: center;
  width: 17px;
  padding: 6px 0;
  background: #f0f0f0;
}
.grid-bar i {
  width: 15px;
  height: 50px;
  margin: 5px 0 auto;
  background: #cdcdcd;
}
.map {
  margin-top: 6px;
  padding: 8px 9px 4px;
}
.map-row {
  display: flex;
  gap: 5px;
  height: 17px;
  padding-left: 7px;
  overflow: hidden;
}
.layer {
  width: 268px;
}
.layer select {
  background: #fff;
  border-color: #7a7a7a;
}
.clipped {
  width: 62px;
  line-height: 17px;
  height: 19px;
  overflow: hidden;
}
.actions {
  display: flex;
  justify-content: flex-end;
  gap: 7px;
  margin-top: 18px;
  padding-right: 20px;
}
```
